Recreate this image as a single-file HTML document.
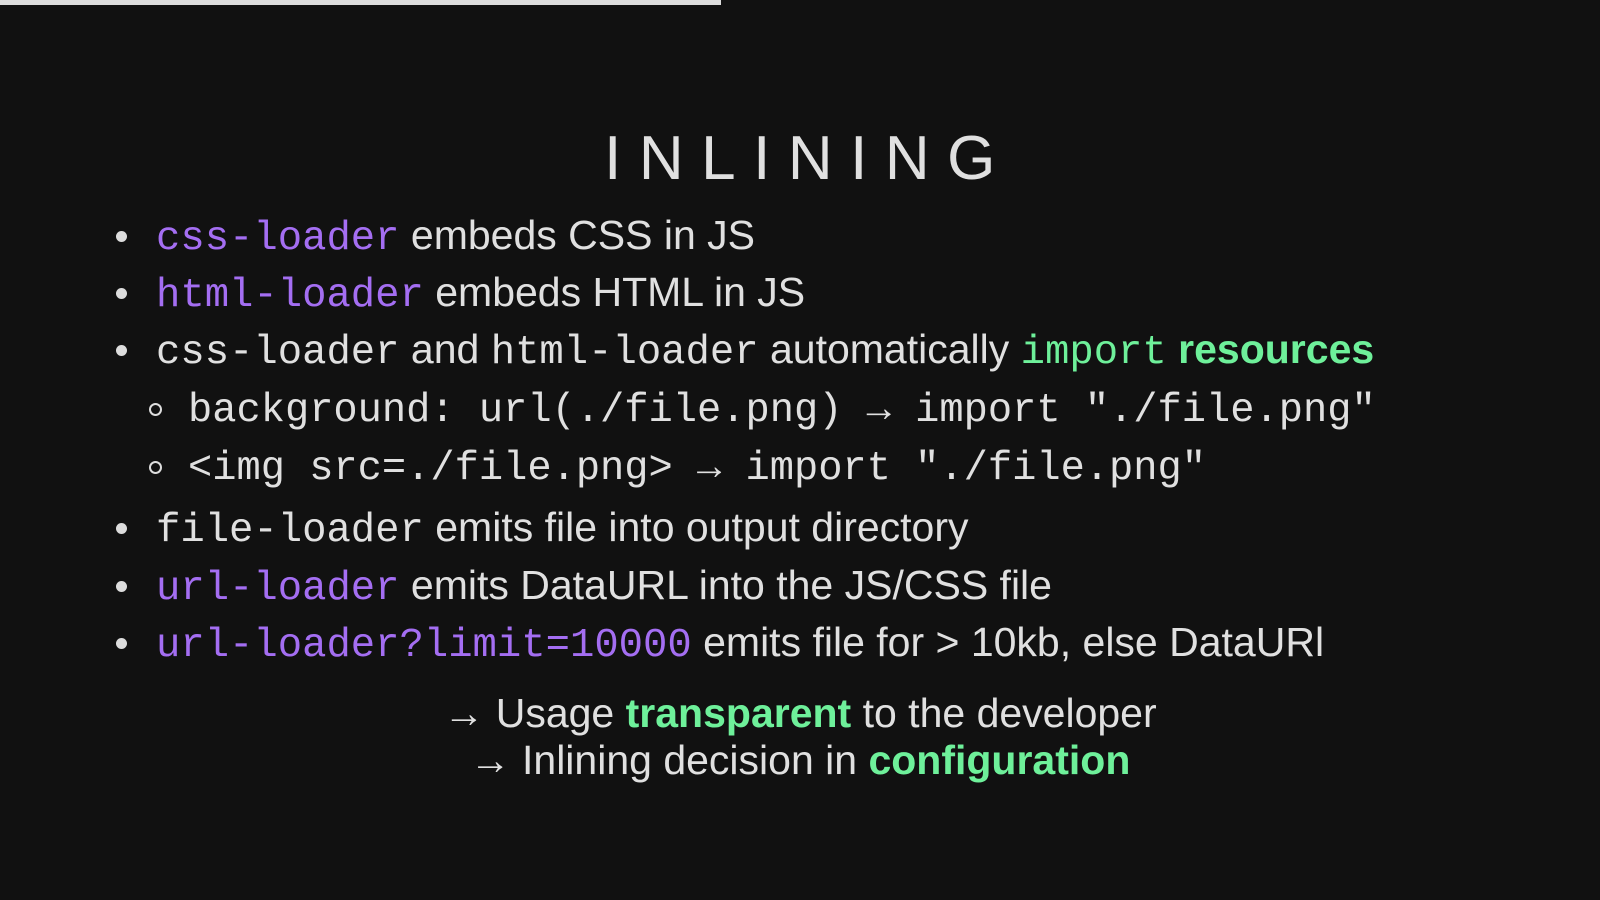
<!DOCTYPE html>
<html><head><style>
body{margin:0;width:1600px;height:900px;background:#111;color:#e0e0e0;font-family:"Liberation Sans",sans-serif;position:relative;overflow:hidden}
.bar{position:absolute;left:0;top:0;width:721px;height:5px;background:#ddd}
h1{position:absolute;left:0;width:1600px;top:124px;margin:0;text-align:center;font-weight:normal;font-size:62px;letter-spacing:17.5px;line-height:70px;color:#e0e0e0;padding-left:17px;box-sizing:border-box}
.l{position:absolute;left:156px;font-size:41px;line-height:40px;white-space:nowrap}
.l.s{left:188px}
.d{position:absolute;left:-40px;top:16px;width:11px;height:11px;border-radius:50%;background:#ddd}
.s .d{left:-39px;background:none;border:2px solid #ddd;width:9px;height:9px}
code{font-family:"Liberation Mono",monospace;font-size:40.6px}
.s code{font-size:40.4px}
.p{color:#a46ef2}.g{color:#6ef09a}.b{font-weight:bold}
.c{position:absolute;left:0;width:1600px;text-align:center;font-size:41px;line-height:40px}
</style></head><body>
<div class="bar"></div>
<h1>INLINING</h1>
<div class="l" style="top:215px"><span class="d"></span><code class="p">css-loader</code> embeds CSS in JS</div>
<div class="l" style="top:272px"><span class="d"></span><code class="p">html-loader</code> embeds HTML in JS</div>
<div class="l" style="top:329px"><span class="d"></span><code>css-loader</code> and <code>html-loader</code> automatically <code class="g">import</code> <span class="g b">resources</span></div>
<div class="l s" style="top:387px"><span class="d"></span><code>background: url(./file.png) → import "./file.png"</code></div>
<div class="l s" style="top:445px"><span class="d"></span><code>&lt;img src=./file.png&gt; → import "./file.png"</code></div>
<div class="l" style="top:507px"><span class="d"></span><code>file-loader</code> emits file into output directory</div>
<div class="l" style="top:565px"><span class="d"></span><code class="p">url-loader</code> emits DataURL into the JS/CSS file</div>
<div class="l" style="top:622px"><span class="d"></span><code class="p">url-loader?limit=10000</code> emits file for &gt; 10kb, else DataURl</div>
<div class="c" style="top:693px">→ Usage <span class="g b">transparent</span> to the developer</div>
<div class="c" style="top:740px">→ Inlining decision in <span class="g b">configuration</span></div>
</body></html>
